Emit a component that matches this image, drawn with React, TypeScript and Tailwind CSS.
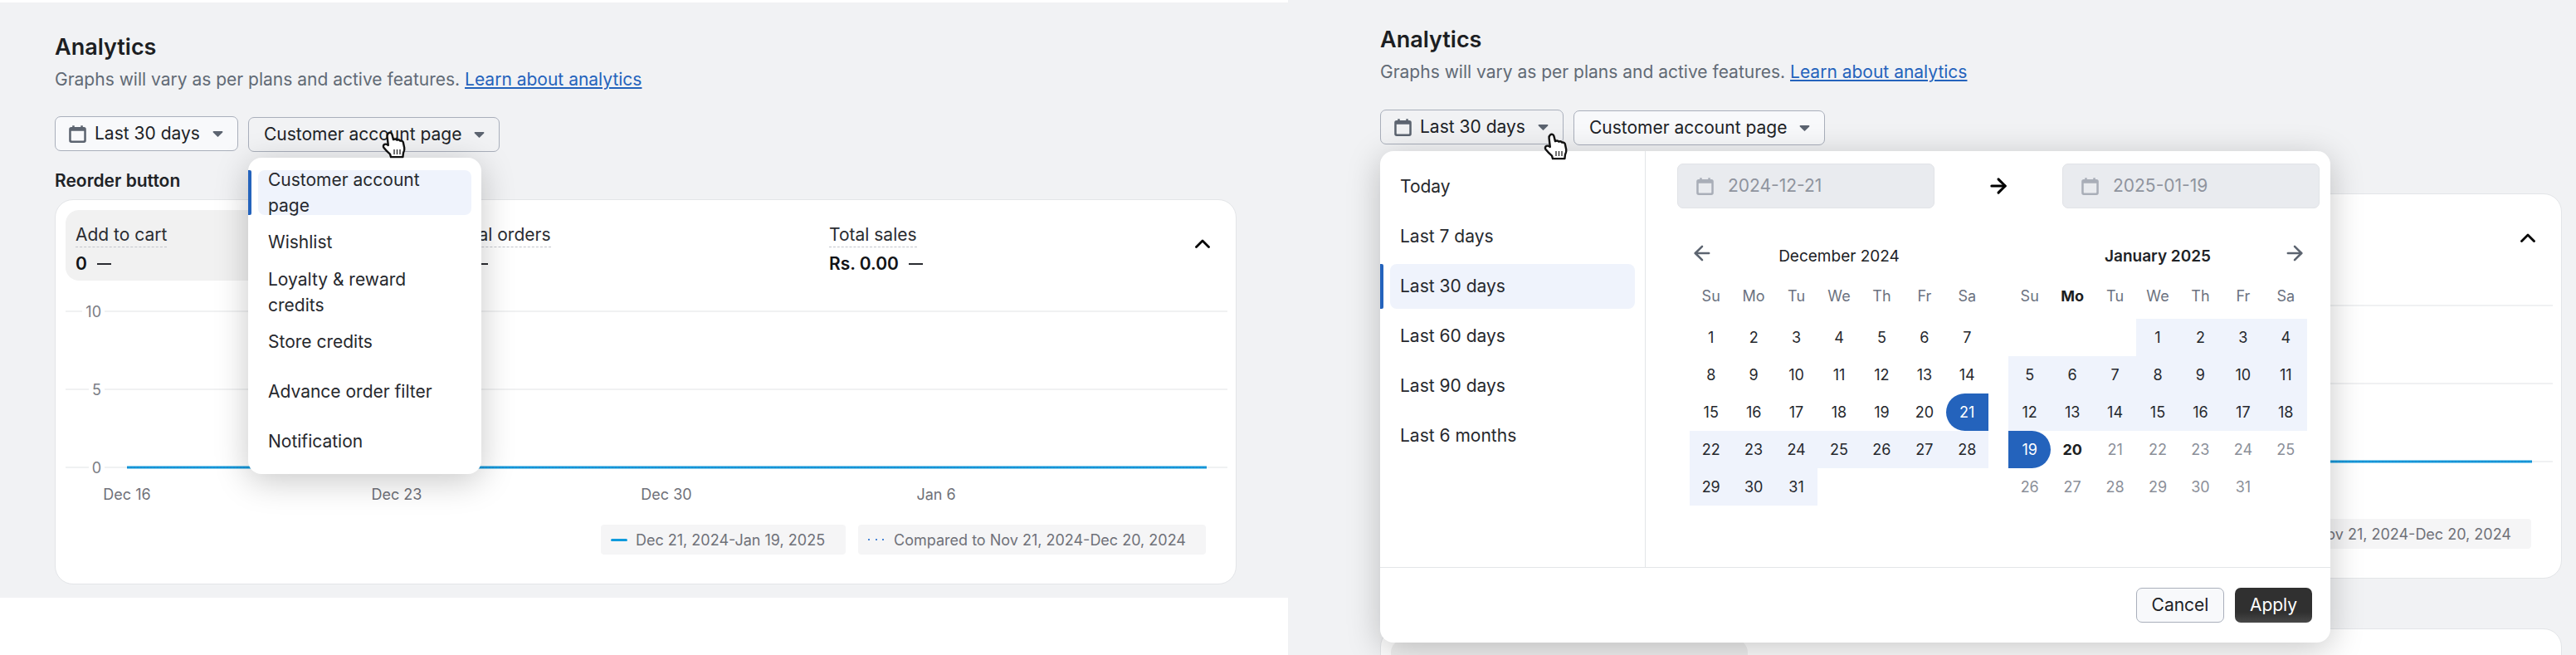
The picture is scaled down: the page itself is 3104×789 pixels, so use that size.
import { ArrowLeft, ArrowRight } from 'lucide-react'

const december = Array.from({ length: 31 }, (_, i) => i + 1)
const january = Array.from({ length: 31 }, (_, i) => i + 1)
const weekDays = ['Su', 'Mo', 'Tu', 'We', 'Th', 'Fr', 'Sa']
const presets = ['Today', 'Last 7 days', 'Last 30 days', 'Last 60 days', 'Last 90 days', 'Last 6 months']
const pages = ['Customer account page', 'Wishlist', 'Loyalty & reward credits', 'Store credits', 'Advance order filter', 'Notification']

const CalendarIcon = ({ className }: { className: string }) => (
  <svg viewBox="0 0 20 20" className={className} fill="currentColor">
    <path
      fillRule="evenodd"
      d="M4 0.2h2.4v1.6h7.2V0.2H16v1.6h1.2A2.6 2.6 0 0 1 19.8 4.4v13a2.6 2.6 0 0 1-2.6 2.6H2.8A2.6 2.6 0 0 1 0.2 17.4v-13A2.6 2.6 0 0 1 2.8 1.8H4V0.2ZM2.6 6.4v10.4c0 .4.3.7.7.7h13.4c.4 0 .7-.3.7-.7V6.4H2.6Z"
    />
  </svg>
)

const Caret = () => (
  <svg viewBox="0 0 12 7" className="h-[7px] w-[13px] text-[#5c6470]" fill="currentColor">
    <path d="M.9 0h10.2c.7 0 1.1.8.6 1.4L6.6 6.6c-.3.4-.9.4-1.2 0L.3 1.4C-.2.8.2 0 .9 0Z" />
  </svg>
)

const HandCursor = ({ className }: { className: string }) => (
  <svg viewBox="0 0 30 34" className={className}>
    <path
      d="M8 2.5c1.6-1.4 3.8-.6 4.4 1.4l1.6 6.2c1.6-.8 3.4-.6 4.4.6 1.4-.6 3-.2 3.8 1 1.4-.4 3 .2 3.6 1.6l1.4 6.6c.4 2.4-.2 4.4-1.2 6.2l-.6 5H11l-1-3.4c-2.6-2.2-5.2-4.8-7.4-7.6-1.2-1.6-.8-3.4.8-4.2 1.2-.6 2.6-.2 4.4 1L6.6 6.6C6.4 5 6.8 3.4 8 2.5Z"
      fill="#fff"
      stroke="#111"
      strokeWidth="2.4"
      strokeLinejoin="round"
    />
    <path d="M15 22v6M18.5 22v6M22 22v6" stroke="#333" strokeWidth="1.4" />
  </svg>
)

const FilterButton = ({ label, withIcon, open }: { label: string; withIcon?: boolean; open: boolean }) => (
  <div
    className={`flex h-[42px] items-center rounded-[7px] border border-[#a9afbb] pr-[17px] text-[#202226] ${
      withIcon ? 'pl-[16px]' : 'mt-px pl-[18px]'
    } ${open ? 'bg-[#f1f2f4]' : 'bg-[#f8f9fb]'}`}
  >
    {withIcon && <CalendarIcon className="mr-[10px] h-[21px] w-[21px] text-[#5c6470]" />}
    <span>{label}</span>
    <span className="ml-[15px]">
      <Caret />
    </span>
  </div>
)

const Stat = ({ label, value, active }: { label: string; value: string; active?: boolean }) => (
  <div className={`h-[85px] w-[430px] rounded-[16px] px-[12px] pt-[14px] ${active ? 'bg-[#f1f1f1]' : ''}`}>
    <div className="inline-block border-b border-dashed border-[#c4c6cc] text-[#2a2c31] leading-[28px]">{label}</div>
    <div className="mt-[5px] flex h-[28px] items-center font-semibold text-[#111317]">
      <span>{value}</span>
      <span className="ml-[12px] h-[2px] w-[17px] bg-[#2a2c31]" />
    </div>
  </div>
)

const StatsRow = () => (
  <div className="flex items-start gap-[24px]">
    <Stat label="Add to cart" value="0" active />
    <Stat label="Total orders" value="0" />
    <Stat label="Total sales" value="Rs. 0.00" />
    <svg viewBox="0 0 18 11" className="ml-[-1px] mt-[35px] h-[11px] w-[18px]" fill="none">
      <path d="M1.5 9.5 9 2l7.5 7.5" stroke="#000" strokeWidth="2.8" strokeLinecap="round" strokeLinejoin="round" />
    </svg>
  </div>
)

const Chart = () => (
  <svg width="1400" height="280" className="block font-['Inter',sans-serif] text-[18px]">
    <g stroke="#f0f1f2" strokeWidth="2">
      <path d="M0 37h20M47 37h1353" />
      <path d="M0 131h28M47 131h1353" />
      <path d="M0 225h28M47 225h1353" />
    </g>
    <g fill="#7a7d85" textAnchor="end" dominantBaseline="central">
      <text x="43" y="37">10</text>
      <text x="43" y="131">5</text>
      <text x="43" y="225">0</text>
    </g>
    <path d="M74 225h1301" stroke="#0f9bdc" strokeWidth="3" />
    <path d="M74 225h1301" stroke="#2c7cc4" strokeWidth="1" strokeDasharray="2 2" />
    <g fill="#6f7179" textAnchor="middle" dominantBaseline="central">
      <text x="74" y="257">Dec 16</text>
      <text x="399" y="257">Dec 23</text>
      <text x="724" y="257">Dec 30</text>
      <text x="1049" y="257">Jan 6</text>
    </g>
  </svg>
)

const Legend = () => (
  <div className="mt-[14px] flex justify-end gap-[15px] pr-[36px] text-[18px] text-[#6f7179]">
    <div className="flex h-[36px] items-center rounded-[4px] bg-[#f5f5f6] pl-[12px] pr-[25px]">
      <span className="mr-[10px] h-[3px] w-[20px] rounded-full bg-[#0f9bdc]" />
      Dec 21, 2024-Jan 19, 2025
    </div>
    <div className="flex h-[36px] items-center rounded-[4px] bg-[#f5f5f6] pl-[12px] pr-[24px]">
      <span className="mr-[12px] flex w-[19px] justify-between">
        <i className="h-[2px] w-[2px] bg-[#4a86d6]" />
        <i className="h-[2px] w-[2px] bg-[#4a86d6]" />
        <i className="h-[2px] w-[2px] bg-[#4a86d6]" />
      </span>
      Compared to Nov 21, 2024-Dec 20, 2024
    </div>
  </div>
)

const AnalyticsCard = () => (
  <div className="h-[464px] rounded-[22px] border border-[#e3e5e8] bg-white pl-[12px] pt-[12px]">
    <StatsRow />
    <Chart />
    <Legend />
  </div>
)

const ListItem = ({ label, active }: { label: string; active: boolean }) => (
  <div className="mb-[6px] flex h-[54px]">
    <div className={`w-[4px] rounded-r-[2px] ${active ? 'bg-[#2463bc]' : ''}`} />
    <div className={`ml-[8px] mr-[12px] flex flex-1 items-center rounded-[8px] px-[12px] ${active ? 'bg-[#eff3fc]' : ''}`}>
      {label}
    </div>
  </div>
)

const Day = ({ day, kind }: { day: number; kind: string }) => {
  const styles: Record<string, string> = {
    plain: 'text-[#26282d]',
    range: 'bg-[#eff3fc] text-[#26282d]',
    start: 'rounded-l-full bg-[#2463bc] text-white',
    end: 'rounded-r-full bg-[#2463bc] text-white',
    today: 'font-bold text-[#1c1e22]',
    muted: 'text-[#8b8f99]',
  }
  return <div className={`flex h-[45px] items-center justify-center ${styles[kind]}`}>{day}</div>
}

const Month = ({
  title,
  bold,
  blanks,
  kindOf,
  arrow,
}: {
  title: string
  bold?: boolean
  blanks: number
  kindOf: (day: number) => string
  arrow: 'left' | 'right'
}) => (
  <div className="w-[360px]">
    <div className="grid h-[30px] grid-cols-[1fr_auto_1fr] items-center">
      <div className="pl-[1px]">
        {arrow === 'left' && <ArrowLeft className="-mt-[8px] h-[28px] w-[28px] text-[#5c6470]" strokeWidth={2.2} />}
      </div>
      <div className={`text-[19px] text-[#202226] ${bold ? 'font-semibold' : ''}`}>{title}</div>
      <div className="flex justify-end pr-[1px]">
        {arrow === 'right' && <ArrowRight className="-mt-[8px] h-[28px] w-[28px] text-[#5c6470]" strokeWidth={2.2} />}
      </div>
    </div>
    <div className="mt-[10px] grid grid-cols-7 text-[18px]">
      {weekDays.map((d) => (
        <div
          key={d}
          className={`flex h-[45px] items-center justify-center ${
            bold && d === 'Mo' ? 'font-bold text-[#1c1e22]' : 'text-[#6b7280]'
          }`}
        >
          {d}
        </div>
      ))}
    </div>
    <div className="mt-[5px] grid grid-cols-7 text-[18px]">
      {Array.from({ length: blanks }, (_, i) => (
        <div key={i} />
      ))}
      {(title.startsWith('Dec') ? december : january).map((day) => (
        <Day key={day} day={day} kind={kindOf(day)} />
      ))}
    </div>
  </div>
)

const DateField = ({ value }: { value: string }) => (
  <div className="flex h-[54px] w-[310px] items-center rounded-[7px] border border-[#e1e3e7] bg-[#e9ebef] pl-[22px] text-[#8f949e]">
    <CalendarIcon className="mr-[17px] h-[21px] w-[21px] text-[#a9aeb8]" />
    {value}
  </div>
)

const DatePopover = () => (
  <div className="absolute left-0 top-[50px] z-10 w-[1145px] rounded-[16px] bg-white text-[#26282d] shadow-[0_8px_40px_rgba(0,0,0,0.22)]">
    <div className="flex h-[501px]">
      <div className="w-[320px] border-r border-[#e3e5e8] pt-[16px]">
        {presets.map((p) => (
          <ListItem key={p} label={p} active={p === 'Last 30 days'} />
        ))}
      </div>
      <div className="flex-1 pt-[15px]">
        <div className="flex items-center justify-between pl-[38px] pr-[13px]">
          <DateField value="2024-12-21" />
          <ArrowRight className="h-[28px] w-[28px] text-black" strokeWidth={2.6} />
          <DateField value="2025-01-19" />
        </div>
        <div className="mt-[43px] flex gap-[24px] pl-[53px]">
          <Month
            title="December 2024"
            blanks={0}
            arrow="left"
            kindOf={(d) => (d === 21 ? 'start' : d > 21 ? 'range' : 'plain')}
          />
          <Month
            title="January 2025"
            bold
            blanks={3}
            arrow="right"
            kindOf={(d) => (d === 19 ? 'end' : d < 19 ? 'range' : d === 20 ? 'today' : 'muted')}
          />
        </div>
      </div>
    </div>
    <div className="flex h-[91px] justify-end gap-[13px] border-t border-[#e3e5e8] pr-[22px] pt-[24px]">
      <button className="h-[42px] w-[106px] rounded-[7px] border border-[#a9afbb] bg-[#f8f9fb] text-[#202226]">Cancel</button>
      <button className="h-[42px] w-[93px] rounded-[7px] bg-gradient-to-b from-[#303030] from-70% to-[#484848] text-white">
        Apply
      </button>
    </div>
  </div>
)

const PageDropdown = () => (
  <div className="absolute left-[233px] top-[50px] z-10 h-[381px] w-[281px] rounded-[16px] bg-white pt-[15px] text-[#26282d] shadow-[0_8px_40px_rgba(0,0,0,0.22)]">
    {pages.map((p) => (
      <ListItem key={p} label={p} active={p === 'Customer account page'} />
    ))}
  </div>
)

const Header = () => (
  <>
    <h1 className="text-[27px] font-semibold leading-[36px] text-[#1c1e22]">Analytics</h1>
    <p className="mt-[7px] leading-[28px] text-[#616a75]">
      Graphs will vary as per plans and active features.{' '}
      <span className="text-[#2463bc] underline">Learn about analytics</span>
    </p>
  </>
)

export default function App() {
  return (
    <div className="flex h-[789px] w-[3104px] overflow-hidden bg-white font-['Inter',sans-serif] text-[21px]">
      <section className="w-[1552px] pt-[3px]">
        <div className="bg-[#f1f2f4] pb-[16px] pl-[66px] pr-[62px] pt-[36px]">
          <Header />
          <div className="relative mt-[30px] flex items-start gap-[12px]">
            <FilterButton label="Last 30 days" withIcon open={false} />
            <FilterButton label="Customer account page" open />
            <PageDropdown />
            <HandCursor className="absolute left-[394px] top-[18px] z-20 h-[34px] w-[30px]" />
          </div>
          <h2 className="mt-[21px] font-semibold leading-[28px] text-[#202226]">Reorder button</h2>
          <div className="mt-[8px]">
            <AnalyticsCard />
          </div>
        </div>
      </section>
      <section className="h-[789px] w-[1552px] bg-[#f1f2f4] pl-[111px] pr-[17px] pt-[30px]">
        <Header />
        <div className="relative mt-[31px] flex items-start gap-[12px]">
          <FilterButton label="Last 30 days" withIcon open />
          <FilterButton label="Customer account page" open={false} />
          <DatePopover />
          <HandCursor className="absolute left-[197px] top-[28px] z-20 h-[34px] w-[30px]" />
        </div>
        <h2 className="mt-[21px] font-semibold leading-[28px] text-[#202226]">Reorder button</h2>
        <div className="mt-[9px]">
          <AnalyticsCard />
        </div>
        <div className="mt-[60px] h-[200px] rounded-[22px] border border-[#e3e5e8] bg-white pl-[12px] pt-[12px]">
          <StatsRow />
        </div>
      </section>
    </div>
  )
}
